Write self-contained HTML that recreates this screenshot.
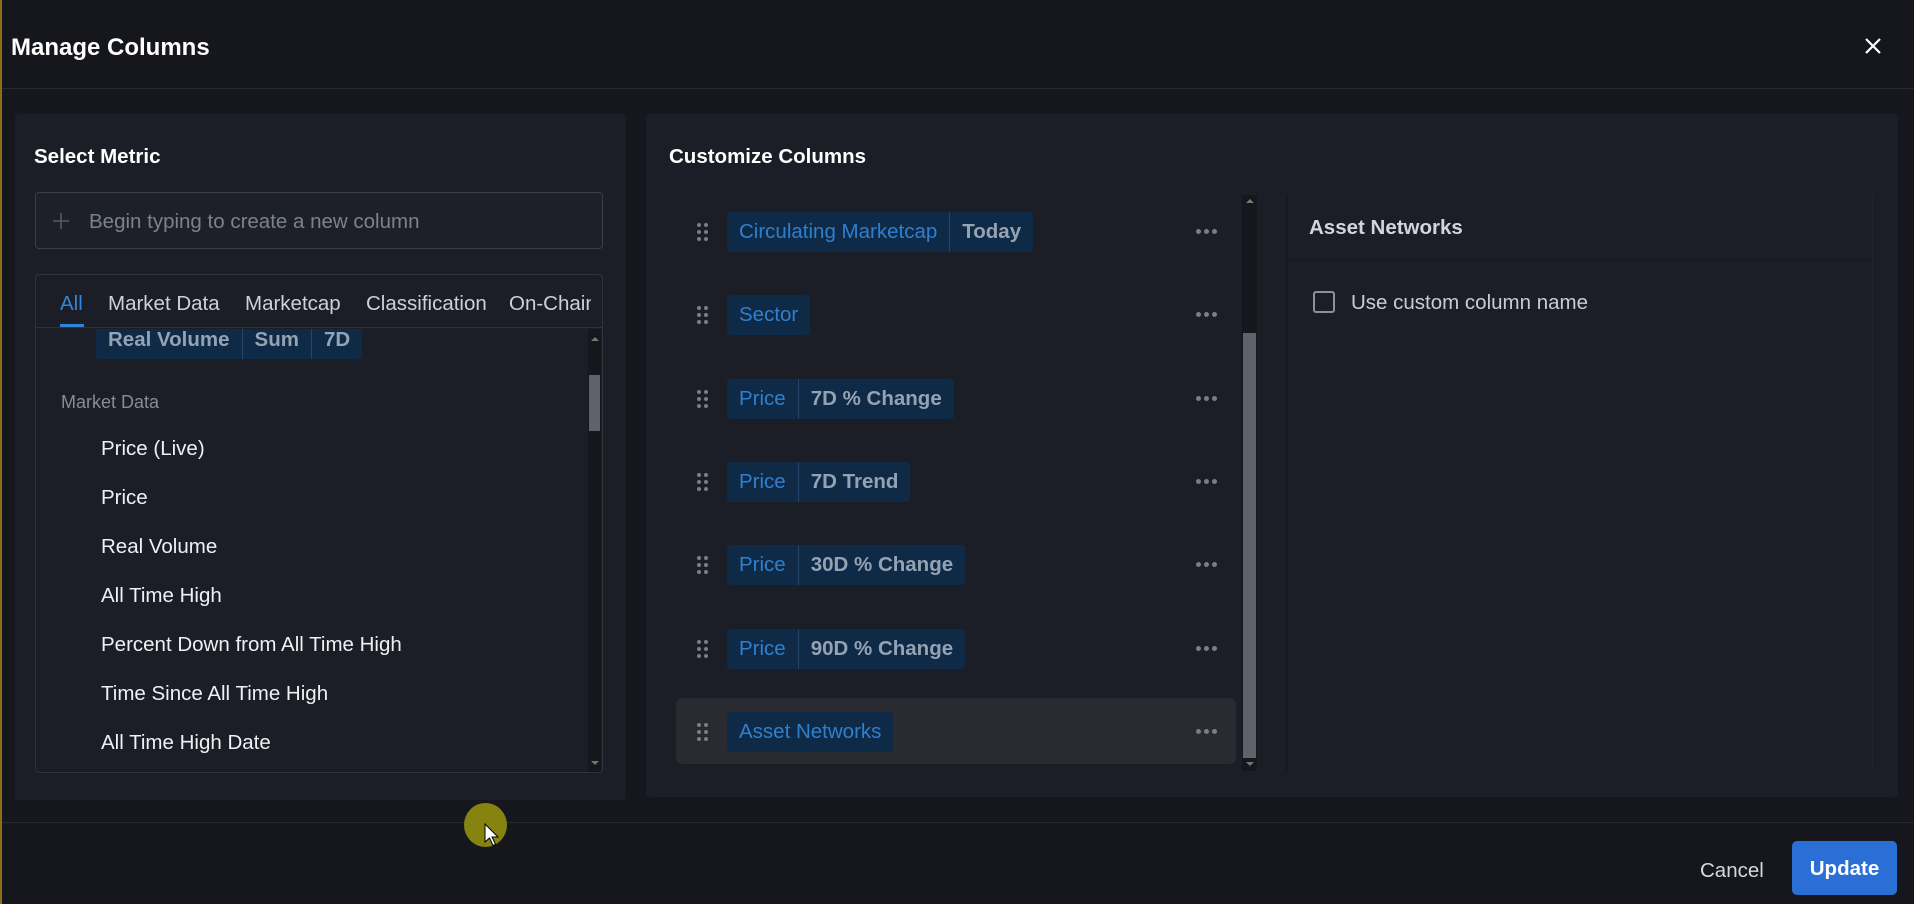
<!DOCTYPE html>
<html><head><meta charset="utf-8"><style>
*{box-sizing:border-box;margin:0;padding:0}
body{width:1914px;height:904px;background:#16171d;font-family:"Liberation Sans",sans-serif;position:relative;overflow:hidden;color:#e6e8ec}
.a{position:absolute}
.chip{position:absolute;height:40px;display:flex;background:#0f2a47;border-radius:3px;font-size:20.5px;line-height:40px;white-space:nowrap}
.chip span{padding:0 12px}
.chip span+span{border-left:1px solid #24446a}
.b{color:#2f7fcf}.g{color:#95a2b2;font-weight:600}
.h{position:absolute;left:697px;width:12px;height:18px}
.h i{position:absolute;width:4px;height:4px;border-radius:50%;background:#7a7d84}
.d{position:absolute;left:1196px;width:22px;height:6px}
.d i{position:absolute;top:0;width:5px;height:5px;border-radius:50%;background:#7a7d84}
.li{position:absolute;left:101px;font-size:20.5px;color:#eef0f3}
.tb{position:absolute;top:17px;font-size:20.5px;color:#cdd1d8;white-space:nowrap}
</style></head><body>
<div class="a" style="left:0;top:0;width:2px;height:904px;background:#8a6d1d"></div>
<div class="a" style="left:11px;top:34px;font-size:24px;font-weight:bold;color:#fff">Manage Columns</div>
<svg class="a" style="left:1864px;top:37px" width="18" height="18" viewBox="0 0 18 18"><path d="M2 2L16 16M16 2L2 16" stroke="#fff" stroke-width="2.2"/></svg>
<div class="a" style="left:2px;top:88px;width:1912px;height:1px;background:#262930"></div>

<div class="a" style="left:15px;top:114px;width:611px;height:686px;background:#1b1e26;border-radius:3px"></div>
<div class="a" style="left:34px;top:145px;font-size:20.5px;font-weight:bold;color:#fff">Select Metric</div>
<div class="a" style="left:35px;top:192px;width:568px;height:57px;border:1px solid #3a3e47;border-radius:4px;background:#1d2028"></div>
<svg class="a" style="left:53px;top:213px" width="16" height="16"><path d="M8 0V16M0 8H16" stroke="#555a63" stroke-width="1.6"/></svg>
<div class="a" style="left:89px;top:210px;font-size:20.5px;color:#7c828c">Begin typing to create a new column</div>
<div class="a" style="left:35px;top:274px;width:568px;height:499px;border:1px solid #30333b;border-radius:4px;overflow:hidden">
  <div class="a" style="left:0;top:52px;width:568px;height:1px;background:#30333b"></div>
  <div class="a" style="left:24px;top:17px;font-size:20.5px;color:#2f86d8">All</div>
  <div class="a" style="left:24px;top:49px;width:24px;height:3px;background:#2f86d8"></div>
  <div class="a" style="left:0;top:0;width:555px;height:52px;overflow:hidden">
    <div class="tb" style="left:72px">Market Data</div>
    <div class="tb" style="left:209px">Marketcap</div>
    <div class="tb" style="left:330px">Classification</div>
    <div class="tb" style="left:473px">On-Chain</div>
  </div>
  <div class="a" style="left:0;top:54px;width:566px;height:445px;overflow:hidden">
    <div class="chip" style="left:60px;top:-8px;height:38px;line-height:38px;font-weight:bold"><span class="g">Real Volume</span><span class="g">Sum</span><span class="g">7D</span></div>
    <div class="a" style="left:25px;top:63px;font-size:18px;color:#868c96">Market Data</div>
    <div class="a" style="left:552px;top:0;width:13px;height:445px;background:#15171c"></div>
    <div class="a" style="left:553px;top:46px;width:11px;height:56px;background:#5f626b"></div>
    <div class="a" style="left:555px;top:8px;width:0;height:0;border:4px solid transparent;border-bottom-color:#777;border-top:0"></div>
    <div class="a" style="left:555px;top:432px;width:0;height:0;border:4px solid transparent;border-top-color:#777;border-bottom:0"></div>
  </div>
</div>
<div class="li" style="top:437px">Price (Live)</div>
<div class="li" style="top:486px">Price</div>
<div class="li" style="top:535px">Real Volume</div>
<div class="li" style="top:584px">All Time High</div>
<div class="li" style="top:633px">Percent Down from All Time High</div>
<div class="li" style="top:682px">Time Since All Time High</div>
<div class="li" style="top:731px">All Time High Date</div>

<div class="a" style="left:646px;top:114px;width:1252px;height:683px;background:#1b1e26;border-radius:3px"></div>
<div class="a" style="left:669px;top:145px;font-size:20.5px;font-weight:bold;color:#fff">Customize Columns</div>
<div class="a" style="left:676px;top:698px;width:560px;height:66px;background:#2a2b31;border-radius:6px"></div>

<div class="chip" style="left:727px;top:212px"><span class="b">Circulating Marketcap</span><span class="g">Today</span></div>
<div class="chip" style="left:727px;top:295px"><span class="b">Sector</span></div>
<div class="chip" style="left:727px;top:379px"><span class="b">Price</span><span class="g">7D % Change</span></div>
<div class="chip" style="left:727px;top:462px"><span class="b">Price</span><span class="g">7D Trend</span></div>
<div class="chip" style="left:727px;top:545px"><span class="b">Price</span><span class="g">30D % Change</span></div>
<div class="chip" style="left:727px;top:629px"><span class="b">Price</span><span class="g">90D % Change</span></div>
<div class="chip" style="left:727px;top:712px"><span class="b">Asset Networks</span></div>

<div class="h" style="top:223px"><i style="left:0;top:0"></i><i style="left:7px;top:0"></i><i style="left:0;top:7px"></i><i style="left:7px;top:7px"></i><i style="left:0;top:14px"></i><i style="left:7px;top:14px"></i></div>
<div class="h" style="top:306px"><i style="left:0;top:0"></i><i style="left:7px;top:0"></i><i style="left:0;top:7px"></i><i style="left:7px;top:7px"></i><i style="left:0;top:14px"></i><i style="left:7px;top:14px"></i></div>
<div class="h" style="top:390px"><i style="left:0;top:0"></i><i style="left:7px;top:0"></i><i style="left:0;top:7px"></i><i style="left:7px;top:7px"></i><i style="left:0;top:14px"></i><i style="left:7px;top:14px"></i></div>
<div class="h" style="top:473px"><i style="left:0;top:0"></i><i style="left:7px;top:0"></i><i style="left:0;top:7px"></i><i style="left:7px;top:7px"></i><i style="left:0;top:14px"></i><i style="left:7px;top:14px"></i></div>
<div class="h" style="top:556px"><i style="left:0;top:0"></i><i style="left:7px;top:0"></i><i style="left:0;top:7px"></i><i style="left:7px;top:7px"></i><i style="left:0;top:14px"></i><i style="left:7px;top:14px"></i></div>
<div class="h" style="top:640px"><i style="left:0;top:0"></i><i style="left:7px;top:0"></i><i style="left:0;top:7px"></i><i style="left:7px;top:7px"></i><i style="left:0;top:14px"></i><i style="left:7px;top:14px"></i></div>
<div class="h" style="top:723px"><i style="left:0;top:0"></i><i style="left:7px;top:0"></i><i style="left:0;top:7px"></i><i style="left:7px;top:7px"></i><i style="left:0;top:14px"></i><i style="left:7px;top:14px"></i></div>

<div class="d" style="top:229px"><i style="left:0"></i><i style="left:8px"></i><i style="left:16px"></i></div>
<div class="d" style="top:312px"><i style="left:0"></i><i style="left:8px"></i><i style="left:16px"></i></div>
<div class="d" style="top:396px"><i style="left:0"></i><i style="left:8px"></i><i style="left:16px"></i></div>
<div class="d" style="top:479px"><i style="left:0"></i><i style="left:8px"></i><i style="left:16px"></i></div>
<div class="d" style="top:562px"><i style="left:0"></i><i style="left:8px"></i><i style="left:16px"></i></div>
<div class="d" style="top:646px"><i style="left:0"></i><i style="left:8px"></i><i style="left:16px"></i></div>
<div class="d" style="top:729px"><i style="left:0"></i><i style="left:8px"></i><i style="left:16px"></i></div>

<div class="a" style="left:1242px;top:195px;width:15px;height:576px;background:#15171c"></div>
<div class="a" style="left:1243px;top:333px;width:13px;height:425px;background:#5f626b"></div>
<div class="a" style="left:1246px;top:199px;width:0;height:0;border:4px solid transparent;border-bottom-color:#777;border-top:0"></div>
<div class="a" style="left:1246px;top:762px;width:0;height:0;border:4px solid transparent;border-top-color:#777;border-bottom:0"></div>

<div class="a" style="left:1286px;top:195px;width:2px;height:576px;background:#17191f"></div>
<div class="a" style="left:1872px;top:195px;width:1px;height:576px;background:#20232a"></div>
<div class="a" style="left:1309px;top:216px;font-size:20.5px;font-weight:bold;color:#d2d5da">Asset Networks</div>
<div class="a" style="left:1288px;top:260px;width:584px;height:1px;background:#17191f"></div>
<div class="a" style="left:1313px;top:291px;width:22px;height:22px;border:2px solid #8d9098;border-radius:3px"></div>
<div class="a" style="left:1351px;top:291px;font-size:20.5px;color:#c9ccd2">Use custom column name</div>

<div class="a" style="left:2px;top:822px;width:1912px;height:1px;background:#262930"></div>
<div class="a" style="left:1700px;top:859px;font-size:20.5px;color:#d5d8dd">Cancel</div>
<div class="a" style="left:1792px;top:841px;width:105px;height:54px;background:#2a6fd6;border-radius:5px;color:#fff;font-size:20.5px;font-weight:bold;text-align:center;line-height:56px">Update</div>

<div class="a" style="left:464px;top:803px;width:43px;height:44px;border-radius:50%;background:#878310"></div>
<svg class="a" style="left:484px;top:823px" width="16" height="24" viewBox="0 0 16 24"><path d="M1 1V19L5.5 15L9 22.5L11.5 21.3L8 14H14Z" fill="#fff" stroke="#000" stroke-width="1"/></svg>
</body></html>
